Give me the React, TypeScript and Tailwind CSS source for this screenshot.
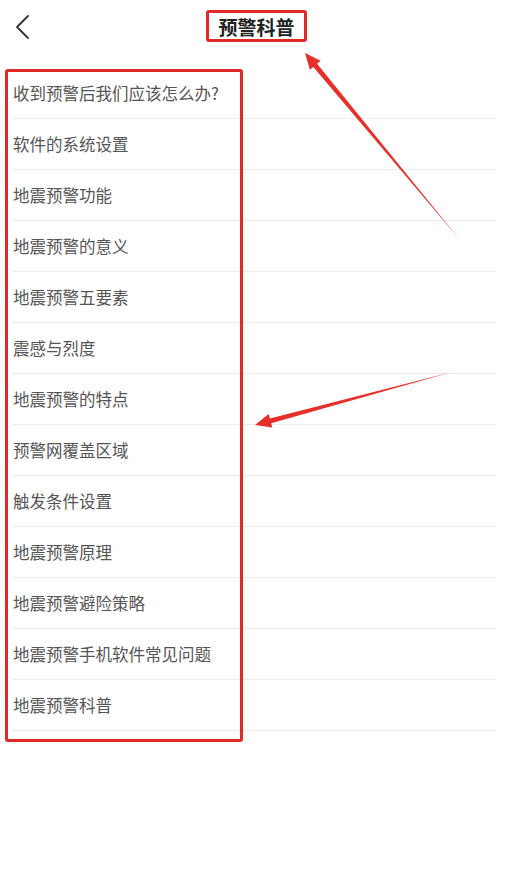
import * as React from 'react';

const items = [
  '收到预警后我们应该怎么办?',
  '软件的系统设置',
  '地震预警功能',
  '地震预警的意义',
  '地震预警五要素',
  '震感与烈度',
  '地震预警的特点',
  '预警网覆盖区域',
  '触发条件设置',
  '地震预警原理',
  '地震预警避险策略',
  '地震预警手机软件常见问题',
  '地震预警科普',
];

function Annotations() {
  return (
    <svg className="absolute inset-0 pointer-events-none" width="511" height="896" viewBox="0 0 511 896">
      {/* arrow to title */}
      <polygon
        points="305,53 309.8,69.8 313.3,66.9 460,240 317.1,63.7 320.6,60.8"
        fill="#e8302a"
      />
      {/* arrow to list */}
      <polygon
        points="255,425 272.3,427.6 271.2,423.2 452,372 269.9,418.4 268.7,414"
        fill="#e8302a"
      />
    </svg>
  );
}

export default function App() {
  return (
    <div
      className="relative w-full h-[896px] bg-white overflow-hidden"
      style={{ fontFamily: '"Noto Sans CJK SC", "Noto Sans", sans-serif' }}
    >
      <header className="h-[68px] grid grid-cols-[1fr_auto_1fr] items-start pt-[10px] pl-[10px] pr-[8px]">
        <button className="mt-[3px] w-[24px] h-[28px] flex items-center justify-center">
          <svg width="16" height="26" viewBox="0 0 16 26" fill="none">
            <path d="M14 2 L3 13 L14 24" stroke="#333" strokeWidth="1.8" strokeLinecap="round" strokeLinejoin="round" />
          </svg>
        </button>
        <div className="w-[101px] h-[32px] border-[3px] border-[#df2a2a] rounded-[3px] flex items-center justify-center">
          <span className="text-[19px] font-bold text-[#222] leading-none">预警科普</span>
        </div>
        <div />
      </header>

      <ul className="ml-[13px] mr-[15px]">
        {items.map((t) => (
          <li key={t} className="h-[51px] flex items-center border-b border-[#ececec]">
            <span className="text-[16.5px] text-[#555] leading-none">{t}</span>
          </li>
        ))}
      </ul>

      {/* annotation frame over the list */}
      <div className="absolute left-[5px] top-[69px] w-[238px] h-[673px] border-[3px] border-[#df2a2a] rounded-[3px] pointer-events-none" />
      <Annotations />
    </div>
  );
}
